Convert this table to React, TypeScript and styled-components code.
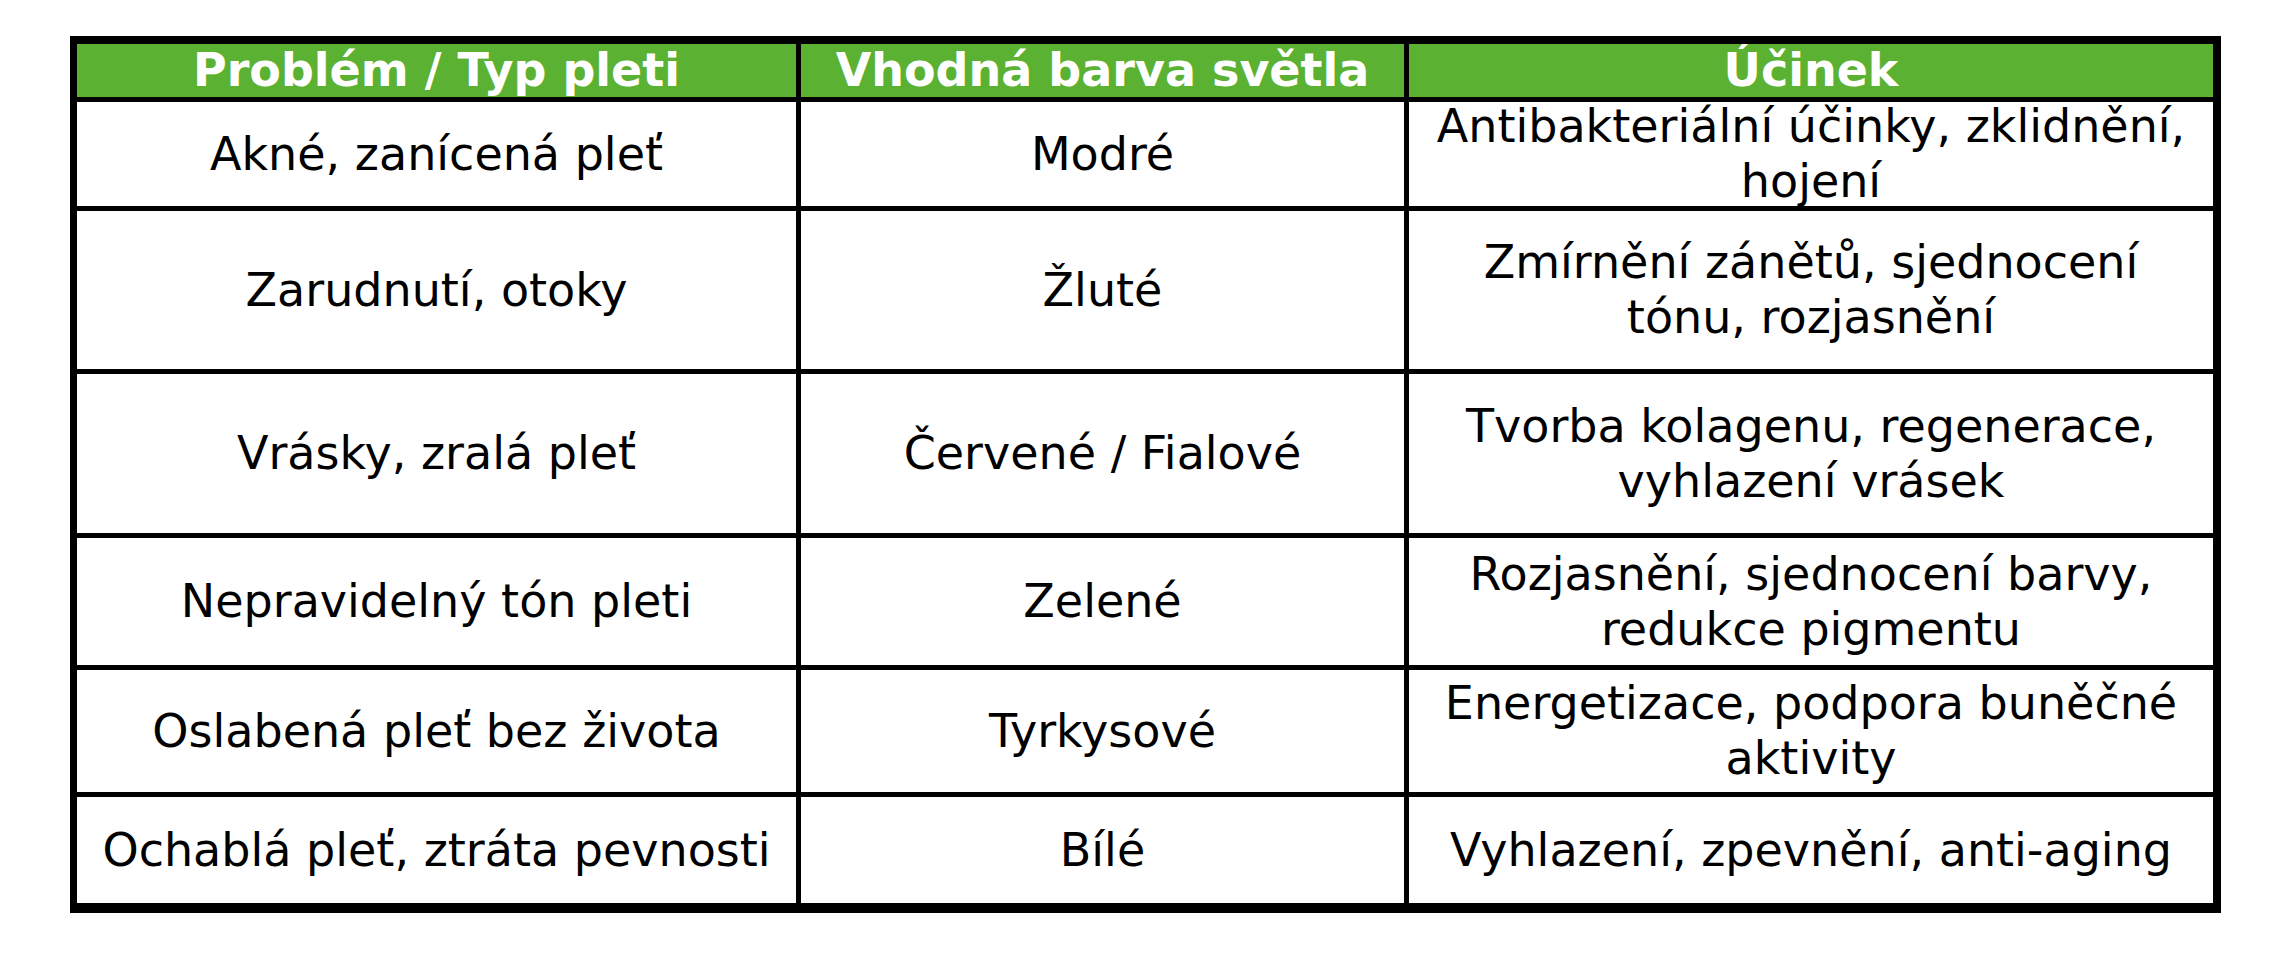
import React from "react";
import { createGlobalStyle, styled } from "styled-components";

const GlobalStyle = createGlobalStyle`
  html, body {
    margin: 0;
    padding: 0;
    background: #ffffff;
  }
  body {
    font-family: "DejaVu Sans", Verdana, sans-serif;
    color: #000000;
  }
`;

const Page = styled.div`
  padding: 36px 0 0 70px;
`;

// mřížka s černým pozadím - mezery tvoří čáry tabulky
const Table = styled.div`
  display: grid;
  grid-template-columns: 719px 603px 804px;
  grid-template-rows: 53px 104px 158px 159px 127px 122px 106px;
  gap: 5px;
  width: max-content;
  padding: 8px 8px 10px 7px;
  background: #000000;
`;

const HeadCell = styled.div`
  display: flex;
  align-items: center;
  justify-content: center;
  background: #5bb131;
  color: #ffffff;
  font-weight: bold;
  font-size: 46px;
  line-height: 53px;
  white-space: nowrap;
  overflow: hidden;
`;

const Cell = styled.div`
  display: flex;
  align-items: center;
  justify-content: center;
  text-align: center;
  background: #ffffff;
  font-size: 46px;
  line-height: 55px;
  white-space: nowrap;
`;

type Row = { problem: string; color: string; effect: string[] };

const rows: Row[] = [
  { problem: "Akné, zanícená pleť", color: "Modré", effect: ["Antibakteriální účinky, zklidnění,", "hojení"] },
  { problem: "Zarudnutí, otoky", color: "Žluté", effect: ["Zmírnění zánětů, sjednocení", "tónu, rozjasnění"] },
  { problem: "Vrásky, zralá pleť", color: "Červené / Fialové", effect: ["Tvorba kolagenu, regenerace,", "vyhlazení vrásek"] },
  { problem: "Nepravidelný tón pleti", color: "Zelené", effect: ["Rozjasnění, sjednocení barvy,", "redukce pigmentu"] },
  { problem: "Oslabená pleť bez života", color: "Tyrkysové", effect: ["Energetizace, podpora buněčné", "aktivity"] },
  { problem: "Ochablá pleť, ztráta pevnosti", color: "Bílé", effect: ["Vyhlazení, zpevnění, anti-aging"] },
];

export default function App() {
  return (
    <Page>
      <GlobalStyle />
      <Table>
        <HeadCell>Problém / Typ pleti</HeadCell>
        <HeadCell>Vhodná barva světla</HeadCell>
        <HeadCell>Účinek</HeadCell>
        {rows.map((r) => (
          <React.Fragment key={r.problem}>
            <Cell>{r.problem}</Cell>
            <Cell>{r.color}</Cell>
            <Cell>
              <div>
                {r.effect.map((line, i) => (
                  <React.Fragment key={i}>
                    {i > 0 && <br />}
                    {line}
                  </React.Fragment>
                ))}
              </div>
            </Cell>
          </React.Fragment>
        ))}
      </Table>
    </Page>
  );
}
